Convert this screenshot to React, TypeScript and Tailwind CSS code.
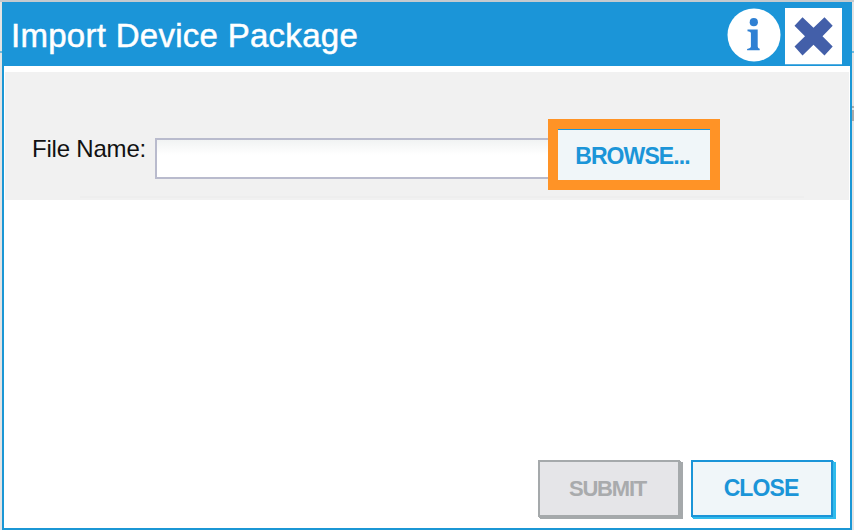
function InfoIcon() {
  return (
    <svg viewBox="0 0 54 54" className="h-[54px] w-[54px] shrink-0">
      <circle cx="27" cy="27" r="26.5" fill="#fff" />
      <circle cx="26.8" cy="14.2" r="4.1" fill="#2f80d3" />
      <path d="M20.5 21.6H30.7V38.5Q30.7 40.4 32.7 40.7V42.3H20.1V40.9Q23.9 40.4 23.9 38.5V25.2Q23.9 23.6 20.5 23.2Z" fill="#2f80d3" />
    </svg>
  );
}

function CloseIcon() {
  return (
    <svg viewBox="0 0 57 57" className="h-[57px] w-[57px] shrink-0">
      <rect width="57" height="56.5" fill="#fff" />
      <rect y="56.5" width="57" height="0.5" fill="#1b95d8" />
      <path
        d="M17.5 9.2L28.5 19.7L39.5 9.2L47.7 17.7L37.5 28.2L47.7 38.4L39.5 47.4L28.5 36.7L17.5 47.4L9.5 38.4L20 28.2L9.5 17.7Z"
        fill="#435fa9"
      />
    </svg>
  );
}

export default function App() {
  return (
    <div className="relative flex h-[530px] w-[854px] overflow-hidden bg-[#e4e4e4] pl-[2px] pt-[2px] font-['Liberation_Sans',Arial,sans-serif] shadow-[inset_0_2px_0_#c4cacf]">
      <div className="flex h-[528px] w-[850px] flex-col border-x-2 border-b-2 border-[#1b97d5] bg-white">
        <header className="flex h-[64px] shrink-0 items-start bg-[#1b95d8] pl-[7px] pr-[8px]">
          <h1 className="mt-[14px] grow whitespace-nowrap text-[33px] leading-[40px] tracking-[0.28px] text-white [-webkit-text-stroke:0.5px_#fff]">
            Import Device Package
          </h1>
          <div className="flex gap-[4px] pt-[6px]">
            <InfoIcon />
            <CloseIcon />
          </div>
        </header>
        <section className="mx-px mt-[6px] flex h-[128px] shrink-0 flex-col bg-[#f1f1f1]">
          <div className="flex h-[124px] items-start pl-[27px]">
            <label className="mt-[63px] w-[123px] whitespace-nowrap text-[24px] leading-[28px] tracking-[-0.2px] text-[#111]">
              File Name:
            </label>
            <div className="mt-[66px] h-[41px] w-[393px] border-y-2 border-l-2 border-[#b9bbcd] bg-linear-to-b from-[#f1f3f3] to-white to-40%" />
            <button className="mt-[47px] flex h-[71px] w-[172px] items-center justify-center border-[10px] border-[#ff9326] bg-[#f0f6f9] pr-[3px] pt-1 text-[23px] font-bold tracking-[-0.9px] text-[#1b95d8] shadow-[inset_0_1px_0_#1b95d8]">
              BROWSE...
            </button>
          </div>
          <div className="ml-[75px] h-[2px] w-[724px] bg-[#eeeeee]" />
        </section>
        <main className="grow" />
        <footer className="flex h-[68px] shrink-0 items-start justify-end gap-[11px] pr-[17px]">
          <button className="flex h-[57px] w-[142px] items-center justify-center border-2 border-[#a5a9ab] bg-[#e5e5e8] pr-[3px] text-[22px] font-bold tracking-[-1.2px] text-[#a9abad] shadow-[1px_1px_0_#a5a9ab,2px_2px_0_#a5a9ab,3px_2px_0_#a5a9ab]">
            SUBMIT
          </button>
          <button className="flex h-[57px] w-[142px] items-center justify-center border-2 border-[#1b95d8] bg-[#f0f6f9] pr-[2px] text-[23px] font-bold tracking-[-0.9px] text-[#1b95d8] shadow-[1px_1px_0_#30bbec,2px_2px_0_#30bbec,3px_2px_0_#30bbec]">
            CLOSE
          </button>
        </footer>
      </div>
      <div className="absolute left-0 top-[51px] h-[2px] w-[2px] bg-[#6fb9dd]" />
      <div className="absolute right-0 top-[51px] h-[2px] w-[2px] bg-[#6fb9dd]" />
      <div className="absolute right-0 top-[106px] h-[2px] w-[2px] bg-[#a9a9a9]" />
      <div className="absolute right-0 top-[110px] h-[11px] w-[2px] bg-[#a9a9a9]" />
    </div>
  );
}
